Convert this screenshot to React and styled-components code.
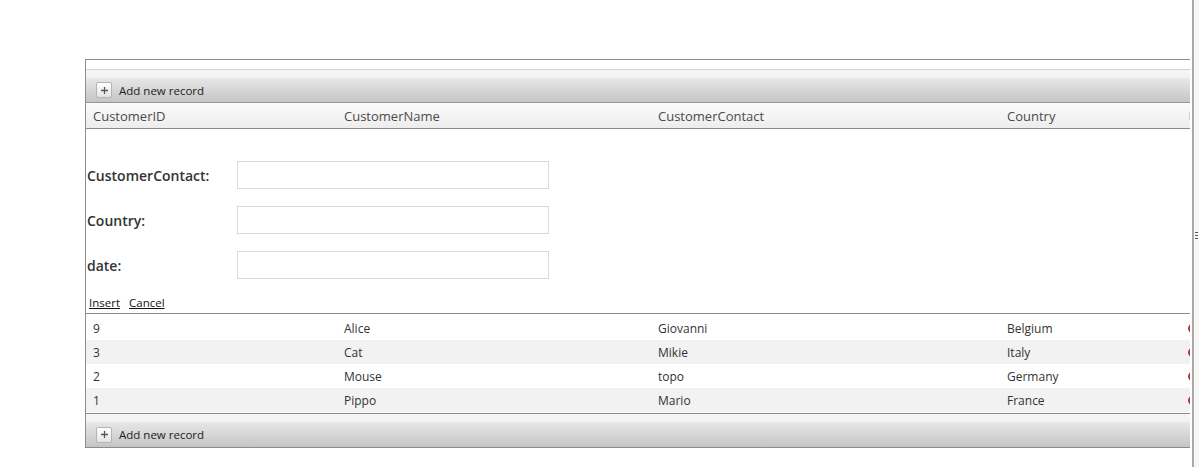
import React from "react";
import styled, { createGlobalStyle } from "styled-components";

const Global = createGlobalStyle`
  html, body { margin: 0; padding: 0; background: #fff; }
  body { font-family: "Open Sans", "Noto Sans", sans-serif; color: #333; }
`;

const Page = styled.div`
  display: flex;
  height: 467px;
  overflow: hidden;
`;

const Main = styled.div`
  flex: 0 0 1192px;
  box-sizing: border-box;
  padding: 59px 2px 0 85px;
`;

const Splitter = styled.div`
  flex: 1;
  border-left: 2px solid #a9a9a9;
  background: #f7f7f7;
  display: flex;
  align-items: center;
  justify-content: flex-end;
  padding-right: 1px;
`;

const Grip = styled.div`
  display: flex;
  flex-direction: column;
  gap: 2px;
  margin-top: 3px;
  span {
    display: block;
    width: 3px;
    height: 1px;
    background: #555;
  }
`;

const Grid = styled.div`
  width: 1105px;
  overflow: hidden;
  border-top: 1px solid #8c8c8c;
  border-left: 1px solid #8c8c8c;
  border-bottom: 1px solid #8c8c8c;
  box-sizing: border-box;
`;

const Inner = styled.div`
  width: 1260px;
`;

const TopStrip = styled.div`
  height: 9px;
  border-bottom: 1px solid #cfcfcf;
  background: #fff;
`;

const Toolbar = styled.div`
  height: 33px;
  box-sizing: border-box;
  padding: 8px 0 0 10px;
  display: flex;
  align-items: center;
  gap: 7px;
  font-size: 11.5px;
  color: #222;
  background: linear-gradient(to bottom, #f6f6f6 0px, #f1f1f1 8px, #e6e6e6 9px, #c5c5c5 100%);
  border-bottom: ${(p) => (p.$bottomLine ? "1px solid #959595" : "none")};
`;

const PlusButton = styled.span`
  width: 16px;
  height: 16px;
  box-sizing: border-box;
  border: 1px solid #b4b4b4;
  border-radius: 2px;
  background: linear-gradient(to bottom, #ffffff, #e4e4e4);
  display: flex;
  align-items: center;
  justify-content: center;
  svg { display: block; }
`;

const Row = styled.div`
  display: grid;
  grid-template-columns: 251px 314px 349px 186px 158px;
  align-items: center;
`;

const HeaderRow = styled(Row)`
  height: 25px;
  background: linear-gradient(to bottom, #fbfbfb, #ededed);
  border-bottom: 1px solid #8a8a8a;
  font-size: 13px;
  color: #4a4a4a;
`;

const Cell = styled.div`
  padding-left: 7px;
  white-space: nowrap;
`;

const EdgeCell = styled.div`
  padding-left: 2px;
  display: flex;
  align-items: center;
`;

const HeaderEdge = styled.span`
  display: block;
  width: 1px;
  height: 8px;
  margin-left: 1px;
  background: #d4d4d4;
`;

const Form = styled.div`
  padding: 32px 0 3px 1px;
  display: flex;
  flex-direction: column;
  gap: 17px;
  border-bottom: 1px solid #8a8a8a;
`;

const FormRow = styled.div`
  display: flex;
  align-items: center;
`;

const Label = styled.label`
  width: 150px;
  font-size: 14px;
  font-weight: 600;
  color: #333;
`;

const Input = styled.input`
  width: 312px;
  height: 28px;
  box-sizing: border-box;
  border: 1px solid #dadada;
  margin: 0;
  padding: 0 4px;
  background: #fff;
  outline: none;
`;

const Actions = styled.div`
  display: flex;
  gap: 9px;
  padding-left: 2px;
  margin-top: -1px;
  font-size: 11.5px;
`;

const ActionLink = styled.a`
  color: #111;
  text-decoration: underline;
  cursor: pointer;
`;

const Body = styled.div`
  padding: 2px 0 1px;
  border-bottom: 1px solid #8a8a8a;
`;

const DataRow = styled(Row)`
  height: 24px;
  font-size: 12px;
  color: #333;
  background: ${(p) => (p.$alt ? "#f2f2f2" : "#fff")};
`;

const DeleteDot = styled.span`
  width: 9px;
  height: 9px;
  border-radius: 50%;
  border: 2px solid #b8322e;
  box-sizing: border-box;
`;

const data = [
  ["9", "Alice", "Giovanni", "Belgium"],
  ["3", "Cat", "Mikie", "Italy"],
  ["2", "Mouse", "topo", "Germany"],
  ["1", "Pippo", "Mario", "France"],
];

function AddBar({ bottomLine }) {
  return (
    <Toolbar $bottomLine={bottomLine}>
      <PlusButton>
        <svg width="9" height="9" viewBox="0 0 9 9">
          <path d="M4.5 1v7M1 4.5h7" stroke="#555" strokeWidth="1.3" />
        </svg>
      </PlusButton>
      <span>Add new record</span>
    </Toolbar>
  );
}

export default function App() {
  return (
    <>
      <Global />
      <Page>
        <Main>
          <Grid>
            <Inner>
              <TopStrip />
              <AddBar bottomLine />
              <HeaderRow>
                <Cell>CustomerID</Cell>
                <Cell>CustomerName</Cell>
                <Cell>CustomerContact</Cell>
                <Cell>Country</Cell>
                <EdgeCell>
                  <HeaderEdge />
                </EdgeCell>
              </HeaderRow>
              <Form>
                <FormRow>
                  <Label>CustomerContact:</Label>
                  <Input />
                </FormRow>
                <FormRow>
                  <Label>Country:</Label>
                  <Input />
                </FormRow>
                <FormRow>
                  <Label>date:</Label>
                  <Input />
                </FormRow>
                <Actions>
                  <ActionLink>Insert</ActionLink>
                  <ActionLink>Cancel</ActionLink>
                </Actions>
              </Form>
              <Body>
                {data.map((r, i) => (
                  <DataRow key={r[0]} $alt={i % 2 === 1}>
                    {r.map((c, j) => (
                      <Cell key={j}>{c}</Cell>
                    ))}
                    <EdgeCell>
                      <DeleteDot />
                    </EdgeCell>
                  </DataRow>
                ))}
              </Body>
              <AddBar />
            </Inner>
          </Grid>
        </Main>
        <Splitter>
          <Grip>
            <span />
            <span />
            <span />
          </Grip>
        </Splitter>
      </Page>
    </>
  );
}
